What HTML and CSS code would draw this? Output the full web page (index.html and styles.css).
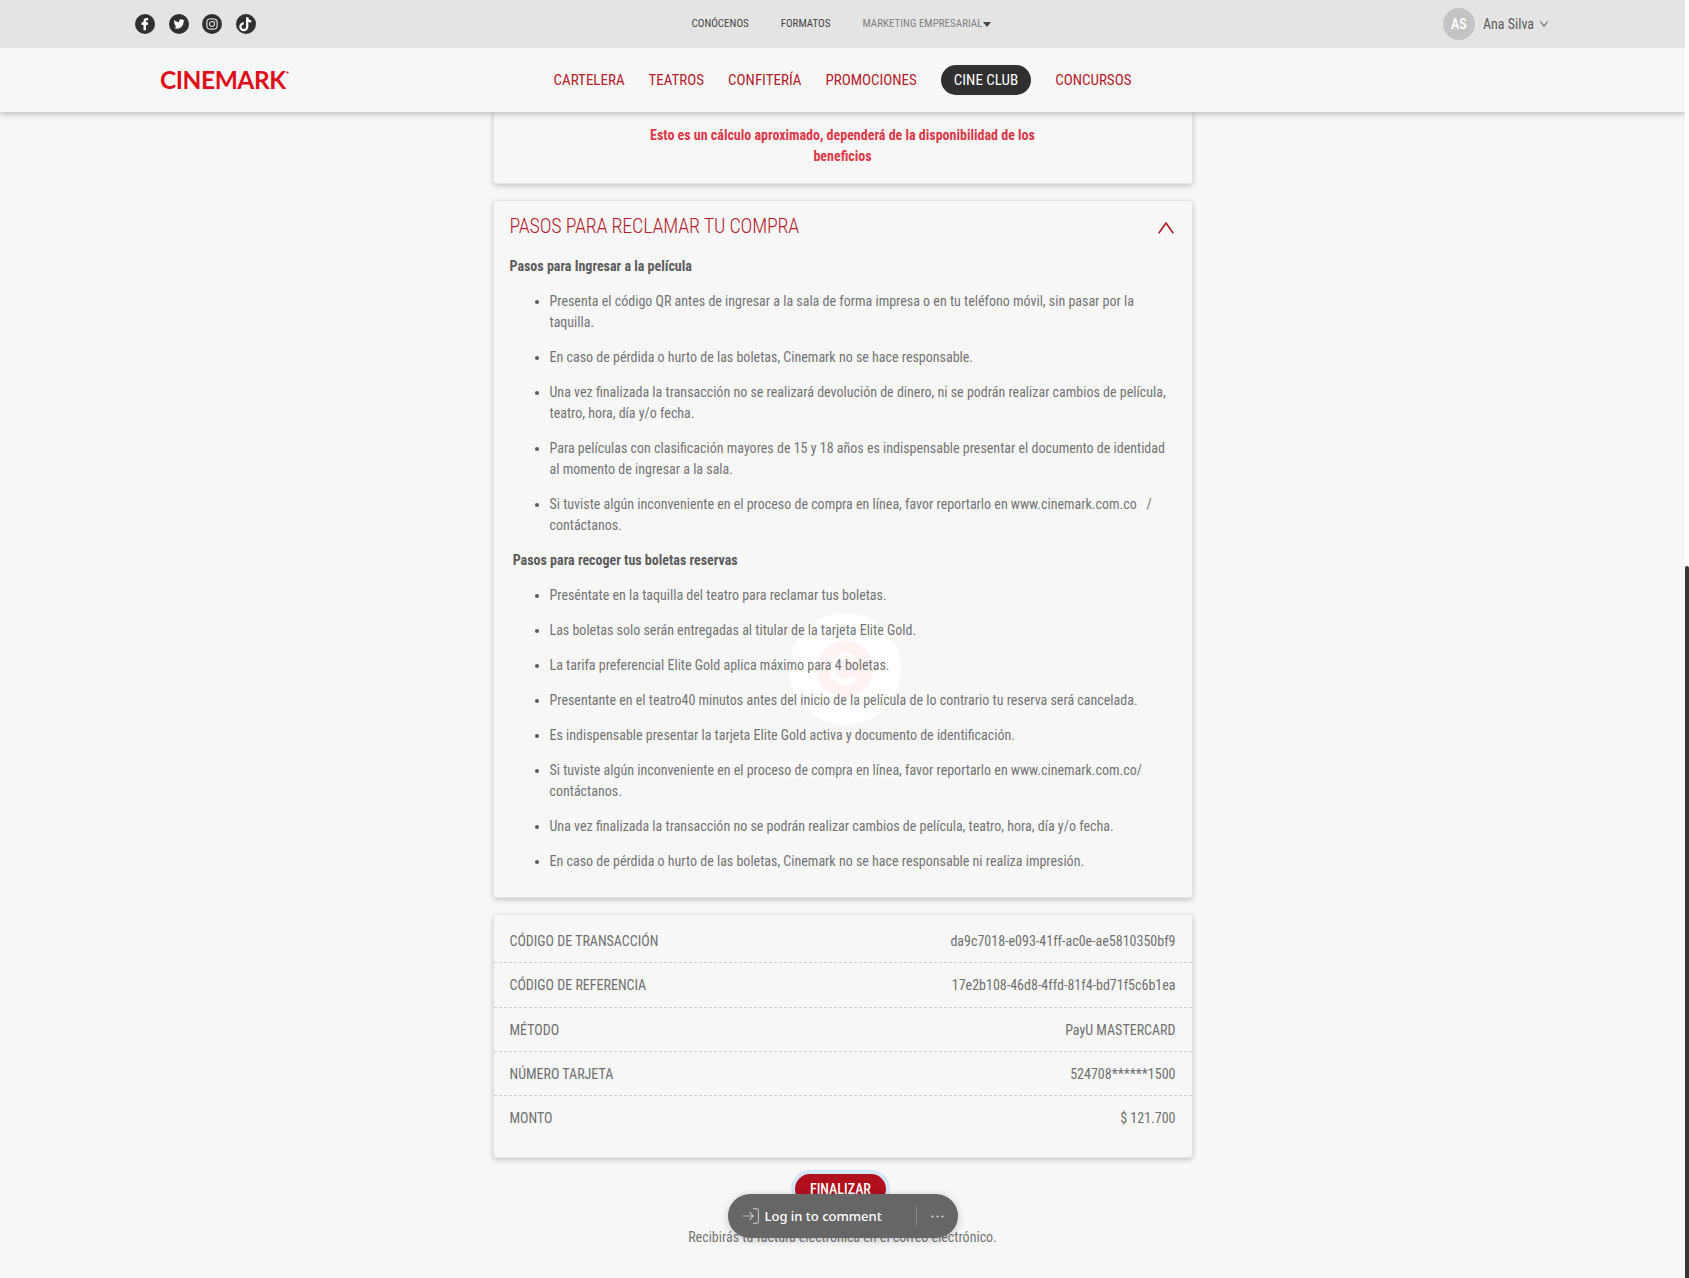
FILE: index.html
```
<!DOCTYPE html>
<html lang="es">
<head>
<meta charset="utf-8">
<title>Cinemark</title>
<link rel="stylesheet" href="styles.css">
</head>
<body>
<div class="page">
  <header class="header">
    <div class="topbar">
      <div class="social">
        <svg viewBox="0 0 20 20"><circle cx="10" cy="10" r="10"/><path class="w" d="M8.5 16.2V10.900H6.600V8.300h1.900V6.900c0-2.100 1.200-3 3-3 .8 0 1.400.1 1.600.1v2.200h-1.100c-.8 0-1 .4-1 1v1.100h2.100l-.3 2.600H11v5.300z"/></svg>
        <svg viewBox="0 0 20 20"><circle cx="10" cy="10" r="10"/><path class="w" d="M15.600 6.500l-1.100.4c.4-.3.7-.7.9-1.200l-1.300.5a2.300 2.300 0 0 0-4 2.100C8.100 8.200 6.500 7.300 5.400 6c-.6 1.100-.3 2.400.7 3.100l-1-.3c0 1.100.8 2 1.800 2.300l-1 .1c.3.9 1.100 1.500 2.100 1.600-.9.7-2.100 1-3.300.9 4.200 2.600 9.800-.1 9.800-5.900z"/></svg>
        <svg viewBox="0 0 20 20"><circle cx="10" cy="10" r="10"/><rect class="l" x="4.900" y="4.900" width="10.200" height="10.200" rx="2.800"/><circle class="l" cx="10" cy="10" r="2.500"/><circle class="w" cx="12.900" cy="7.100" r=".65"/></svg>
        <svg viewBox="0 0 20 20"><circle cx="10" cy="10" r="10"/><path class="t" d="M11.200 3.200v9.600a3.400 3.400 0 1 1-3.400-3.400M11.200 3.800c.3 2.100 1.800 3.500 4.100 3.600"/></svg>
      </div>
      <nav class="links">
        <a>CONÓCENOS</a><a>FORMATOS</a><a class="dim">MARKETING EMPRESARIAL<i class="caret"></i></a>
      </nav>
      <div class="user">
        <span class="avatar">AS</span><span>Ana Silva</span>
        <svg class="down" viewBox="0 0 8 6"><path d="M.4.6 4 5.200 7.600.6"/></svg>
      </div>
    </div>
    <div class="mainbar">
      <svg class="logo" viewBox="0 0 130 32"><text x="0" y="24.500" textLength="126" lengthAdjust="spacing">CINEMARK</text><circle cx="127.500" cy="8.500" r="1.100"/></svg>
      <nav class="menu">
        <a>CARTELERA</a><a>TEATROS</a><a>CONFITERÍA</a><a>PROMOCIONES</a><a class="club">CINE CLUB</a><a>CONCURSOS</a>
      </nav>
    </div>
  </header>

  <main class="content">
    <section class="card note"><p>Esto es un cálculo aproximado, dependerá de la disponibilidad de los beneficios</p></section>

    <section class="card steps">
      <h2>PASOS PARA RECLAMAR TU COMPRA <svg class="up" viewBox="0 0 16 12"><path d="M.7 11.300 8 1l7.300 10.300"/></svg></h2>
      <h3>Pasos para Ingresar a la película</h3>
      <ul>
        <li>Presenta el código QR antes de ingresar a la sala de forma impresa o en tu teléfono móvil, sin pasar por la taquilla.</li>
        <li>En caso de pérdida o hurto de las boletas, Cinemark no se hace responsable.</li>
        <li>Una vez finalizada la transacción no se realizará devolución de dinero, ni se podrán realizar cambios de película, teatro, hora, día y/o fecha.</li>
        <li>Para películas con clasificación mayores de 15 y 18 años es indispensable presentar el documento de identidad al momento de ingresar a la sala.</li>
        <li>Si tuviste algún inconveniente en el proceso de compra en línea, favor reportarlo en www.cinemark.com.co&nbsp;&nbsp; / contáctanos.</li>
      </ul>
      <h3>&nbsp;Pasos para recoger tus boletas reservas</h3>
      <ul>
        <li>Preséntate en la taquilla del teatro para reclamar tus boletas.</li>
        <li>Las boletas solo serán entregadas al titular de la tarjeta Elite Gold.</li>
        <li>La tarifa preferencial Elite Gold aplica máximo para 4 boletas.</li>
        <li>Presentante en el teatro40 minutos antes del inicio de la película de lo contrario tu reserva será cancelada.</li>
        <li>Es indispensable presentar la tarjeta Elite Gold activa y documento de identificación.</li>
        <li>Si tuviste algún inconveniente en el proceso de compra en línea, favor reportarlo en www.cinemark.com.co/ contáctanos.</li>
        <li>Una vez finalizada la transacción no se podrán realizar cambios de película, teatro, hora, día y/o fecha.</li>
        <li>En caso de pérdida o hurto de las boletas, Cinemark no se hace responsable ni realiza impresión.</li>
      </ul>
    </section>

    <section class="card payment">
      <div class="row"><span>CÓDIGO DE TRANSACCIÓN</span><span>da9c7018-e093-41ff-ac0e-ae5810350bf9</span></div>
      <div class="row"><span>CÓDIGO DE REFERENCIA</span><span>17e2b108-46d8-4ffd-81f4-bd71f5c6b1ea</span></div>
      <div class="row"><span>MÉTODO</span><span>PayU MASTERCARD</span></div>
      <div class="row"><span>NÚMERO TARJETA</span><span>524708******1500</span></div>
      <div class="row"><span>MONTO</span><span>$ 121.700</span></div>
    </section>

    <button class="finish">FINALIZAR</button>
    <p class="receipt">Recibirás tu factura electrónica en el correo electrónico.</p>
  </main>

  <div class="loader">
    <svg viewBox="0 0 112 112"><circle cx="56" cy="56" r="56" fill="#fff"/><circle cx="56" cy="56" r="28.500" fill="#fff3f4"/><path d="M66 47.500a13 13 0 1 0 0 17" fill="none" stroke="#fff" stroke-width="6"/></svg>
    <span>CARGANDO...</span>
  </div>
</div>
<div class="scrollbar"><div class="thumb"></div></div>

<div class="comment">
  <svg class="login" viewBox="0 0 16 16"><path d="M0 8h10M6.500 4.200 10.300 8l-3.800 3.800M10 .6h3.500q2 0 2 2v10.800q0 2-2 2H10"/></svg>
  <span>Log in to comment</span>
  <i class="sep"></i>
  <svg class="dots" viewBox="0 0 13 3"><circle cx="1.500" cy="1.500" r="1.100"/><circle cx="6.500" cy="1.500" r="1.100"/><circle cx="11.500" cy="1.500" r="1.100"/></svg>
</div>
</body>
</html>
```
FILE: styles.css
```
* { box-sizing: border-box; }
body {
  margin: 0;
  height: 1278px;
  display: flex;
  overflow: hidden;
  background: #f7f7f7;
  color: #5c5c5c;
  font: 400 14px/21px "Roboto Condensed", Roboto, sans-serif;
}
.page { width: 1685px; position: relative; overflow: hidden; }

.header { position: relative; z-index: 3; background: #f7f7f7; box-shadow: 0 2px 6px rgba(0,0,0,.25); }
.topbar {
  display: grid;
  grid-template-columns: 1fr auto 1fr;
  align-items: center;
  height: 48px;
  padding: 0 137px 0 135px;
  background: #e4e4e4;
}
.social { display: flex; gap: 13.700px; }
.social svg { width: 20px; height: 20px; fill: #303030; }
.social .w { fill: #fff; }
.social .l { fill: none; stroke: #fff; stroke-width: 1; }
.social .t { fill: none; stroke: #fff; stroke-width: 2.300; }
.links { display: flex; gap: 32px; font-size: 11px; color: #444; line-height: 16px; }
.links .dim { color: #828282; display: flex; align-items: center; }
.caret { border: 4px solid transparent; border-top: 5px solid #444; border-bottom: 0; margin-left: 1px; }
.user { display: flex; align-items: center; justify-content: flex-end; line-height: 18px; }
.avatar {
  width: 32px; height: 32px; margin-right: 8px;
  border-radius: 50%;
  background: #c4c4c4; color: #fff;
  font-weight: 500; line-height: 32px; text-align: center;
}
.down { width: 8px; height: 6px; margin-left: 6px; fill: none; stroke: #444; overflow: visible; }
.mainbar {
  display: grid;
  grid-template-columns: 1fr auto 1fr;
  align-items: center;
  height: 64px;
  padding: 0 160px;
}
.logo { width: 130px; height: 32px; fill: #dd0d19; }
.logo text { font: 700 24.500px Lato, sans-serif; }
.menu { display: flex; align-items: center; gap: 24px; font-size: 15px; line-height: 30px; color: #b5202b; }
.club { padding: 0 13px; border-radius: 15px; background: #303030; color: #fff; }

.content { display: flex; flex-direction: column; align-items: center; gap: 16px; }
.card {
  position: relative;
  width: 700px;
  border: 1px solid #e3e3e3;
  border-radius: 4px;
  box-shadow: 0 2px 5px rgba(0,0,0,.2);
}
.note { height: 72px; padding-top: 13px; border-top: 0; border-radius: 0 0 4px 4px; }
.note p { width: 400px; margin: 0 auto; text-align: center; font-weight: 700; color: #dc3848; }
.steps { height: 698px; padding: 13px 16px 0; }
h2 {
  display: flex; justify-content: space-between; align-items: center;
  margin: 0 0 18px;
  font-size: 20px; font-weight: 300; line-height: 24px; letter-spacing: -.2px;
  color: #b5202b;
}
.up { width: 16px; height: 12px; margin: 4px 2px 0 0; fill: none; stroke: #b0101c; stroke-width: 1.500; }
h3 { margin: 0 0 14px; font-size: 14px; font-weight: 700; line-height: 21px; }
ul { margin: 0; padding-left: 40px; color: #747474; }
li { margin-bottom: 14px; }
li::marker { color: #5c5c5c; }
.payment { height: 244px; padding-top: 4px; }
.row { display: flex; justify-content: space-between; height: 44.300px; padding: 0 16px; line-height: 44px; border-bottom: 1px dashed #ccc; color: #707070; }
.row:last-child { border: 0; }

.finish {
  width: 91px; height: 30px; padding: 0; margin-right: 4px;
  border: 0; border-radius: 15px;
  background: #b0101c; box-shadow: 0 0 0 4px #d3e6f7; color: #fff;
  font: 500 14px/30px "Roboto Condensed", Roboto, sans-serif;
}
.receipt { margin: 7px 0 0; color: #747474; }

.loader {
  position: absolute; z-index: -1; left: 783px; top: 613px;
  width: 124px;
  display: flex; flex-direction: column; align-items: center;
}
.loader svg { width: 112px; height: 112px; }
.loader span { margin-top: 34px; font-size: 22px; line-height: 24px; font-weight: 700; color: #fff; }

.scrollbar { width: 4px; background: #fff; padding-top: 566px; }
.thumb { height: 712px; background: #363636; border-radius: 2px 2px 0 0; }

.comment {
  position: absolute; z-index: 5; left: 728px; top: 1194px;
  width: 230px; height: 44px; padding: 0 14px 0 14.500px;
  display: flex; align-items: center;
  border-radius: 22px;
  background: #666; color: #fff;
  box-shadow: 0 2px 8px rgba(0,0,0,.2);
  font: 500 13px/20px "Noto Sans", "Open Sans", sans-serif;
}
.login { width: 16px; height: 16px; margin-right: 6px; fill: none; stroke: #bbb; stroke-width: 1.200; }
.sep { width: 1px; height: 20px; margin: 0 14px 0 auto; background: #858585; }
.dots { width: 13px; height: 3px; fill: #ddd; }
```
